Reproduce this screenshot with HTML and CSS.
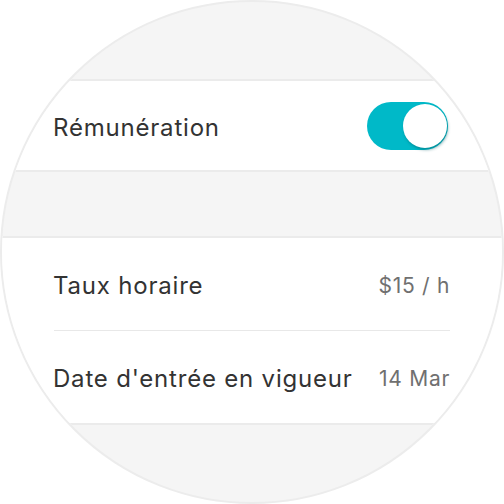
FILE: index.html
```html
<!DOCTYPE html>
<html lang="fr">
<head>
<meta charset="utf-8">
<link rel="stylesheet" href="styles.css">
</head>
<body>
<div class="watch">
  <div class="spacer top"></div>
  <div class="group">
    <div class="row">
      <span class="label">Rémunération</span>
      <span class="toggle"><span class="knob"></span></span>
    </div>
  </div>
  <div class="spacer mid"></div>
  <div class="group">
    <div class="row tall">
      <span class="label">Taux horaire</span>
      <span class="value">$15 / h</span>
    </div>
    <div class="divider"></div>
    <div class="row tall">
      <span class="label">Date d'entrée en vigueur</span>
      <span class="value">14 Mar</span>
    </div>
  </div>
</div>
</body>
</html>
```
FILE: styles.css
```css
html, body {
  margin: 0;
  padding: 0;
  background: #ffffff;
}
.watch {
  width: 504px;
  height: 504px;
  box-sizing: border-box;
  border: 2px solid #ececec;
  border-radius: 50%;
  overflow: hidden;
  background: #f5f5f5;
  font-family: Inter, "Liberation Sans", sans-serif;
}
.spacer.top { height: 77px; }
.spacer.mid { height: 64px; }
.group {
  background: #ffffff;
  border-top: 2px solid #ebebeb;
  border-bottom: 2px solid #ebebeb;
}
.row {
  height: 89px;
  display: flex;
  align-items: center;
  justify-content: space-between;
  padding: 0 52px 0 51px;
}
.row.tall { height: 92px; }
.label {
  font-size: 24px;
  color: #333333;
  letter-spacing: 0.8px;
  padding-top: 3px;
}
.value {
  font-size: 21px;
  color: #707070;
  letter-spacing: 0.7px;
  padding-top: 3px;
}
.divider {
  height: 1px;
  margin: 0 52px 0 52px;
  background: #e8e8e8;
}
.toggle {
  position: relative;
  width: 81px;
  height: 48px;
  border-radius: 24px;
  background: #00b9c8;
  margin-right: 2px;
}
.knob {
  position: absolute;
  right: 1px;
  top: 2px;
  width: 44px;
  height: 44px;
  border-radius: 50%;
  background: #ffffff;
  box-shadow: 1px 2px 3px rgba(0, 90, 100, 0.45);
}
```
